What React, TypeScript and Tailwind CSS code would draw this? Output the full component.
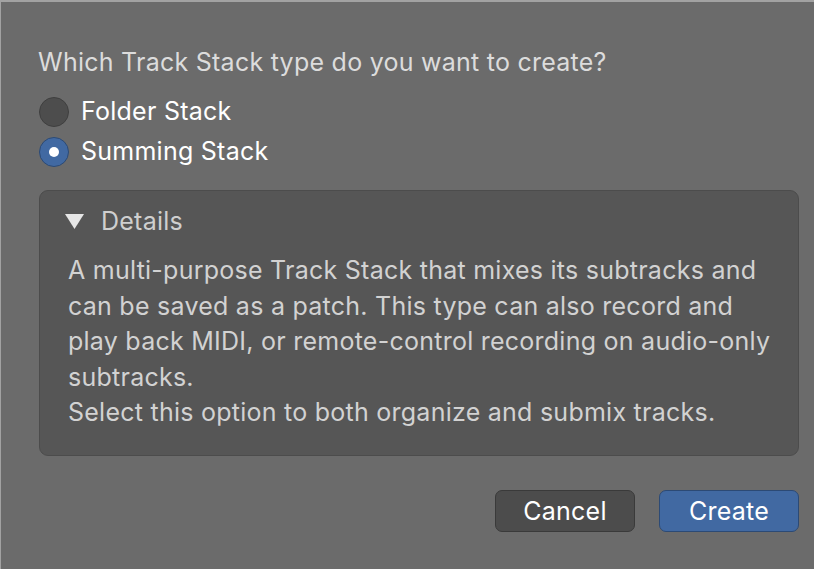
export default function App() {
  return (
    <div
      className="flex h-[569px] w-[814px] flex-col border-l border-t-2 border-[#a2a2a2] bg-[#6b6b6b] text-[25px] tracking-[0.25px]"
      style={{ fontFamily: 'Inter, "Noto Sans", sans-serif' }}
    >
      {/* question */}
      <div className="pl-[37px] pt-[45px] leading-[30px] text-[#dcdcdc]">
        Which Track Stack type do you want to create?
      </div>

      {/* radio options */}
      <div className="mt-[15px] flex flex-col pl-[38px]">
        <label className="flex h-[40px] items-center gap-[12px] text-white">
          <span className="-mt-[1px] h-[30px] w-[30px] rounded-full border border-[#3f3f3f] bg-[#4d4d4d]" />
          Folder Stack
        </label>
        <label className="flex h-[40px] items-center gap-[12px] text-white">
          <span className="-mt-[1px] flex h-[30px] w-[30px] items-center justify-center rounded-full border border-[#2c4a75] bg-[#4169a2]">
            <span className="h-[10px] w-[10px] rounded-full bg-white" />
          </span>
          Summing Stack
        </label>
      </div>

      {/* details */}
      <div className="ml-[38px] mr-[15px] mt-[18px] h-[266px] rounded-[9px] border border-[#4c4c4c] bg-[#565656]">
        <div className="flex items-center pl-[25px] pt-[15px] leading-[30px] text-[#cfcfcf]">
          <svg width="19" height="17" viewBox="0 0 19 17" className="mr-[17px]">
            <polygon points="0,1 19,1 9.5,16" fill="#e6e6e6" />
          </svg>
          Details
        </div>
        <div className="pl-[28px] pr-[10px] pt-[17px] leading-[35.5px] text-[#d2d2d2]">
          <p>A multi-purpose Track Stack that mixes its subtracks and</p>
          <p>can be saved as a patch. This type can also record and</p>
          <p>play back MIDI, or remote-control recording on audio-only</p>
          <p>subtracks.</p>
          <p>Select this option to both organize and submix tracks.</p>
        </div>
      </div>

      {/* buttons */}
      <div className="mr-[15px] mt-[34px] flex justify-end gap-[24px]">
        <button className="h-[42px] w-[140px] rounded-[7px] border border-[#3a3a3a] bg-[#4c4c4c] pt-[2px] text-white">
          Cancel
        </button>
        <button className="h-[42px] w-[140px] rounded-[7px] border border-[#2c4a75] bg-[#4169a2] pt-[2px] text-white">
          Create
        </button>
      </div>
    </div>
  );
}
